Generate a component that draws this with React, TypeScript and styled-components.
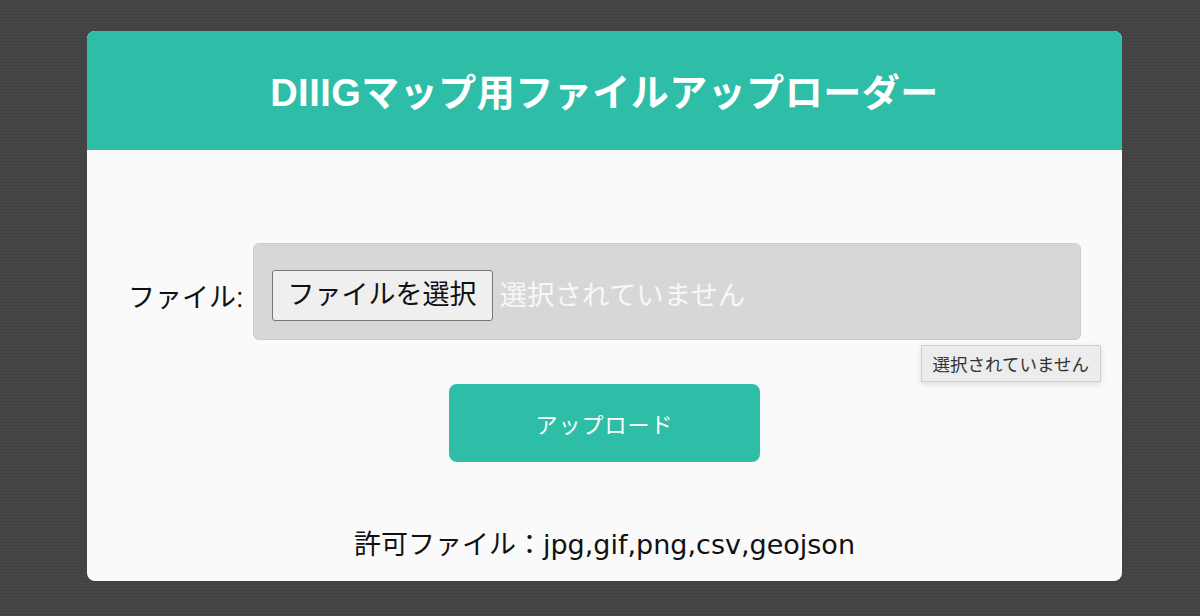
import styled, { createGlobalStyle } from "styled-components";

const GlobalStyle = createGlobalStyle`
  html, body {
    margin: 0;
    padding: 0;
    height: 100%;
  }
  body {
    background-color: #444444;
    background-image: repeating-linear-gradient(
      to bottom,
      #454545 0px,
      #454545 2px,
      #414141 2px,
      #414141 3px
    );
    font-family: "Liberation Sans", "Noto Sans CJK JP", sans-serif;
  }
`;

const Page = styled.div`
  min-height: 616px;
  box-sizing: border-box;
  padding: 31px 78px 0 87px;
`;

const Card = styled.div`
  width: 1035px;
  height: 550px;
  background-color: #fafafa;
  border-radius: 8px;
  overflow: hidden;
  display: flex;
  flex-direction: column;
`;

const Header = styled.header`
  height: 119px;
  flex-shrink: 0;
  background-color: #2ebea8;
  display: flex;
  align-items: center;
  justify-content: center;
`;

const Title = styled.h1`
  margin: 0;
  padding-top: 6px;
  color: #ffffff;
  font-size: 38px;
  font-weight: 700;
  line-height: 1.2;
  letter-spacing: 0.5px;
`;

const Form = styled.form`
  display: flex;
  flex-direction: column;
  align-items: center;
  padding-top: 93px;
`;

const FileRow = styled.div`
  align-self: stretch;
  display: flex;
  align-items: center;
  gap: 9px;
  padding: 0 41px 0 41px;
`;

const Label = styled.label`
  font-size: 27px;
  color: #111111;
  line-height: 36px;
  margin-top: 12px;
`;

const FileBox = styled.div`
  position: relative;
  flex: 1;
  display: flex;
  align-items: center;
  gap: 7px;
  box-sizing: border-box;
  height: 97px;
  padding: 8px 18px 0;
  background-color: #d7d7d7;
  border: 1px solid #cccccc;
  border-radius: 6px;
`;

const ChooseButton = styled.button`
  height: 51px;
  padding: 0 15px;
  font-family: inherit;
  font-size: 27px;
  color: #111111;
  background-color: #efefef;
  border: 1px solid #767676;
  border-radius: 3px;
  line-height: 1;
`;

const FileStatus = styled.span`
  font-size: 27.5px;
  color: #f7f7f7;
  line-height: 36px;
`;

const Tooltip = styled.div`
  position: absolute;
  right: -21px;
  top: 101px;
  padding: 0 11px;
  height: 35px;
  display: flex;
  align-items: center;
  font-size: 17.5px;
  color: #333333;
  background-color: #ececec;
  border: 1px solid #d0d0d0;
  box-shadow: 0 2px 6px rgba(0, 0, 0, 0.12);
  white-space: nowrap;
`;

const UploadButton = styled.button`
  margin-top: 44px;
  width: 311px;
  height: 78px;
  border: none;
  border-radius: 8px;
  background-color: #2ebea8;
  color: #ffffff;
  font-family: inherit;
  font-size: 22px;
  letter-spacing: 1px;
`;

const Allowed = styled.p`
  margin: 65px 0 0;
  font-size: 27px;
  line-height: 36px;
  color: #111111;
`;

const Extensions = styled.span`
  font-family: "DejaVu Sans", "Liberation Sans", sans-serif;
  font-size: 27px;
`;

export default function App() {
  return (
    <>
      <GlobalStyle />
      <Page>
        <Card>
          <Header>
            <Title>DIIIGマップ用ファイルアップローダー</Title>
          </Header>
          <Form onSubmit={(e) => e.preventDefault()}>
            <FileRow>
              <Label htmlFor="file-input">ファイル:</Label>
              <FileBox>
                <ChooseButton id="file-input" type="button">
                  ファイルを選択
                </ChooseButton>
                <FileStatus>選択されていません</FileStatus>
                <Tooltip>選択されていません</Tooltip>
              </FileBox>
            </FileRow>
            <UploadButton type="submit">アップロード</UploadButton>
            <Allowed>
              許可ファイル：<Extensions>jpg,gif,png,csv,geojson</Extensions>
            </Allowed>
          </Form>
        </Card>
      </Page>
    </>
  );
}
